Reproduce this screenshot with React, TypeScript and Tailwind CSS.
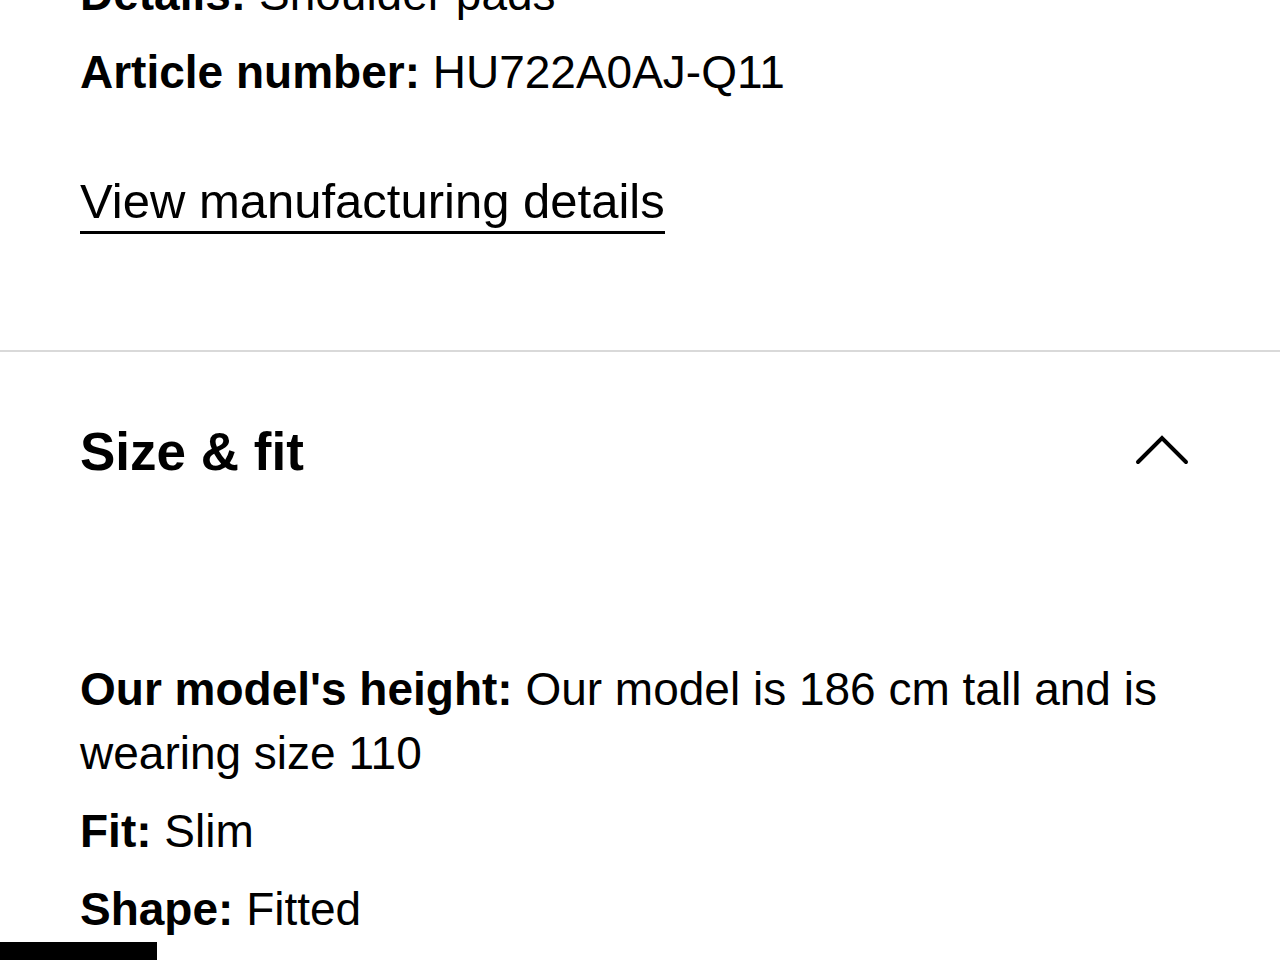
export default function App() {
  return (
    <div className="h-[960px] w-[1280px] overflow-hidden bg-white text-black [font-family:'Liberation_Sans',Arial,sans-serif]">
      <section className="px-20 pb-[116px]">
        <ul className="-mt-[38px] flex flex-col gap-[14px] text-[46px] leading-[64px]">
          <li>
            <span className="font-bold">Details:</span> Shoulder pads
          </li>
          <li>
            <span className="font-bold">Article number:</span> HU722A0AJ-Q11
          </li>
        </ul>
        <a
          href="#manufacturing"
          className="mt-[67px] inline-block border-b-[3px] border-black text-[49px] leading-[60px]"
        >
          View manufacturing details
        </a>
      </section>

      <section className="border-t-2 border-[#d9d9d9] px-20 pt-[68px]">
        <div className="flex items-center justify-between">
          <h2 className="text-[53px] font-bold leading-[64px]">Size &amp; fit</h2>
          <svg
            width="54"
            height="30"
            viewBox="0 0 54 30"
            fill="none"
            stroke="currentColor"
            strokeWidth="4"
            strokeLinecap="round"
            className="mr-[11px] mb-1"
          >
            <polyline points="3,27 27,3 51,27" />
          </svg>
        </div>

        <ul className="mt-[173px] flex flex-col gap-[14px] text-[46px] leading-[64px]">
          <li>
            <span className="font-bold">Our model's height:</span> Our model is 186 cm tall and is
            wearing size 110
          </li>
          <li>
            <span className="font-bold">Fit:</span> Slim
          </li>
          <li>
            <span className="font-bold">Shape:</span> Fitted
          </li>
        </ul>
      </section>

      <div className="mt-px h-[18px] w-[157px] bg-black" />
    </div>
  );
}
